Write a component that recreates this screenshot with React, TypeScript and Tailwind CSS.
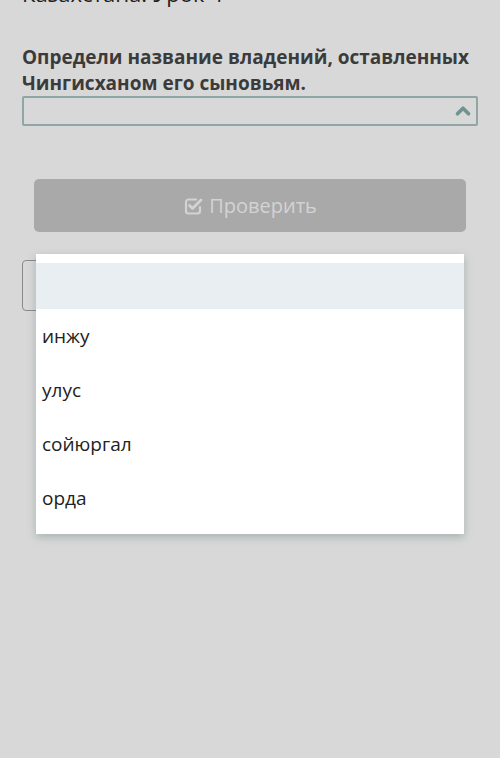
import { ChevronUp } from "lucide-react";

const options = ["", "инжу", "улус", "сойюргал", "орда"];

function CheckSquareIcon() {
  return (
    <svg viewBox="0 0 20 20" className="h-[20px] w-[20px]" fill="none" stroke="currentColor">
      <path
        d="M13 3.5H5.5a2.5 2.5 0 0 0-2.5 2.5v9a2.5 2.5 0 0 0 2.5 2.5h9a2.5 2.5 0 0 0 2.5-2.5v-4"
        strokeWidth={2.2}
        strokeLinecap="round"
      />
      <path d="M6.5 9.5l3 3L18 4" strokeWidth={2.8} strokeLinecap="round" strokeLinejoin="round" />
    </svg>
  );
}

export default function App() {
  return (
    <div
      className="relative min-h-[758px] w-[500px] overflow-hidden bg-[#d8d8d8]"
      style={{ fontFamily: '"Open Sans", "Noto Sans", sans-serif' }}
    >
      <div className="px-[22px]">
        {/* Lesson title, scrolled off the top */}
        <h1 className="-mt-[21px] text-[22px] leading-[28px] text-[#1e1e1e]">
          Казахстана. Урок 4
        </h1>

        {/* Question */}
        <p className="mt-[37px] text-[19px] font-bold leading-[26px] text-[#3b3b3b]">
          Определи название владений, оставленных Чингисханом его сыновьям.
        </p>

        {/* Select */}
        <div className="flex h-[30px] items-center justify-end rounded-[2px] border-2 border-[#8fa6a5] pr-[2px]">
          <ChevronUp className="h-[22px] w-[22px] text-[#6f9392]" strokeWidth={4} />
        </div>

        {/* Check button */}
        <div className="mx-[12px] mt-[53px] flex h-[53px] items-center justify-center gap-[6px] rounded-[5px] bg-[#a9a9a9] text-[20px] text-[#d3d3d3]">
          <CheckSquareIcon />
          <span>Проверить</span>
        </div>

        {/* Button behind the menu */}
        <div className="mt-[28px] h-[51px] w-[200px] rounded-[4px] border border-[#8a8a8a]" />
      </div>

      {/* Open dropdown menu */}
      <ul className="absolute left-[36px] top-[254px] w-[428px] bg-white pt-[9px] pb-[9px] shadow-[0_3px_8px_rgba(80,110,110,0.35)]">
        {options.map((o, i) => (
          <li
            key={i}
            className={`flex items-center px-[6px] text-[19px] text-[#222] ${
              i === 0 ? "h-[46px] bg-[#e8eef1]" : "h-[54px]"
            }`}
          >
            {o}
          </li>
        ))}
      </ul>
    </div>
  );
}
